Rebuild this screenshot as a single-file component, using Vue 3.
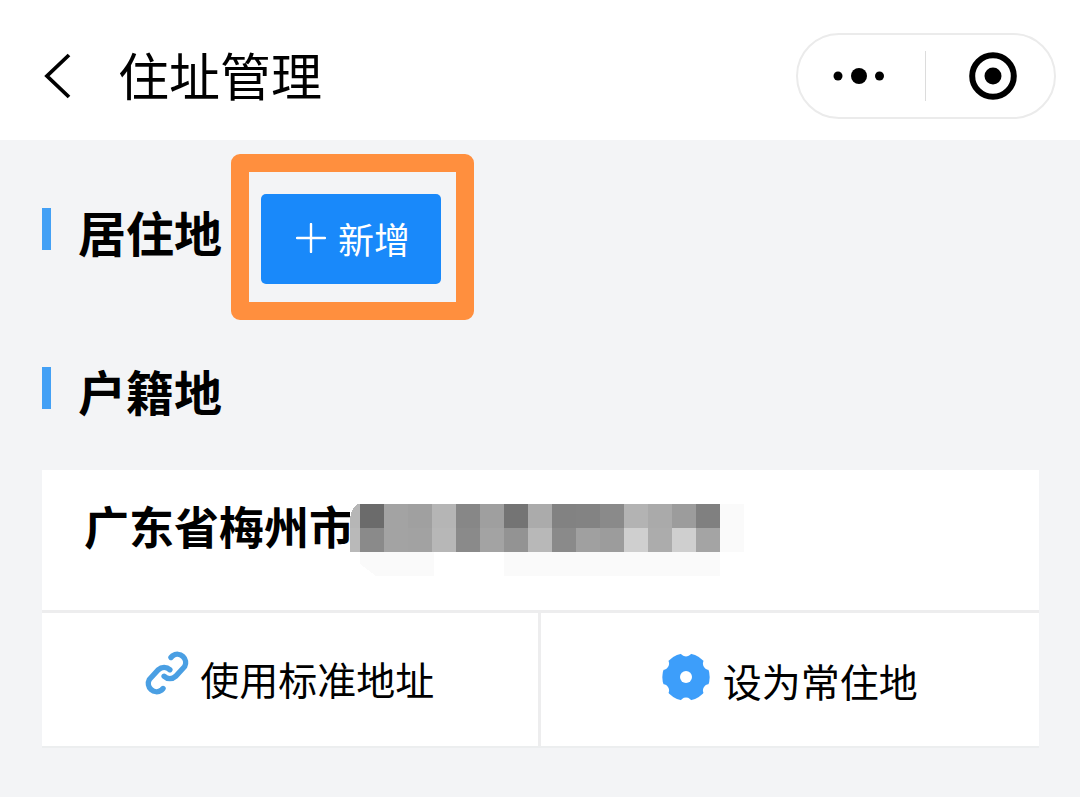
<script setup>
const shades = [
  ['#b6b6b6', '#b9b9b9'], ['#6b6b6b', '#8a8a8a'], ['#a3a3a3', '#a3a3a3'], ['#a0a0a0', '#a2a2a2'],
  ['#b5b5b5', '#b7b7b7'], ['#878787', '#8a8a8a'], ['#9f9f9f', '#a3a3a3'], ['#747474', '#939393'],
  ['#ababab', '#b8b8b8'], ['#828282', '#8a8a8a'], ['#838383', '#a0a0a0'], ['#8a8a8a', '#9c9c9c'],
  ['#b3b3b3', '#cfcfcf'], ['#aaaaaa', '#acacac'], ['#9c9c9c', '#cfcfcf'], ['#808080', '#a4a4a4'],
]
const tiles = shades.flatMap((pair, i) =>
  pair.map((fill, row) => ({
    key: `${i}-${row}`,
    fill,
    x: i === 0 ? 0 : 10 + (i - 1) * 24,
    y: row * 24,
    w: i === 0 ? 10 : 24,
  })),
)
</script>

<template>
  <div class="page">
    <header class="bar">
      <button class="back" aria-label="返回">
        <svg width="28" height="48" viewBox="0 0 28 48"><path d="M25 3 3 24 25 45" fill="none" stroke="#000" stroke-width="3.8" /></svg>
      </button>
      <h1>住址管理</h1>
      <div class="capsule">
        <button class="more" aria-label="更多">
          <svg width="52" height="18" viewBox="0 0 52 18"><circle cx="5" cy="9" r="4.5" /><circle cx="26" cy="9" r="8" /><circle cx="46.5" cy="9" r="4.5" /></svg>
        </button>
        <span class="divider"></span>
        <button class="close" aria-label="关闭">
          <svg width="48" height="48" viewBox="0 0 48 48"><circle cx="24" cy="24" r="20.8" fill="none" stroke="#000" stroke-width="6" /><circle cx="24" cy="24" r="8.5" /></svg>
        </button>
      </div>
    </header>

    <main>
      <section class="residence">
        <h2>居住地</h2>
        <div class="highlight">
          <button class="add">
            <svg width="30" height="30" viewBox="0 0 30 30"><path d="M15 1v28M1 15h28" stroke="#fff" stroke-width="2.4" stroke-linecap="round" /></svg>
            新增
          </button>
        </div>
      </section>

      <section class="household">
        <h2>户籍地</h2>
        <article class="card">
          <div class="address">
            <strong>广东省梅州市</strong>
            <svg class="mosaic" width="394" height="72" viewBox="0 0 394 72" shape-rendering="crispEdges">
              <path d="M10 48h74v24H26L10 60zM154 48h216v24H154zM370 0h24v48h-24z" fill="#fafafa" />
              <rect v-for="t in tiles" :key="t.key" :x="t.x" :y="t.y" :width="t.w" height="24" :fill="t.fill" />
              <path d="M0 0h8Q2 3 0 14z" fill="#fff" />
            </svg>
          </div>
          <div class="actions">
            <button class="link">
              <svg width="44" height="44" viewBox="3 3 122 122" fill="none" stroke="#4a9fe3" stroke-width="15" stroke-linecap="round">
                <path d="M75 21 80 16A23 23 0 0 1 113 46L88 73A23 23 0 0 1 56 73" />
                <path d="M53 107 48 112A23 23 0 0 1 15 82L40 55A23 23 0 0 1 72 55" />
              </svg>
              <span>使用标准地址</span>
            </button>
            <button class="usual">
              <svg width="48" height="48" viewBox="-24 -24 48 48">
                <circle r="23.7" fill="#3d9efa" />
                <ellipse v-for="n in 6" :key="n" cy="-25" rx="5.6" ry="4.4" fill="#fff" :transform="`rotate(${n * 60})`" />
                <circle r="6" fill="#fff" />
              </svg>
              <span>设为常住地</span>
            </button>
          </div>
        </article>
      </section>
    </main>
  </div>
</template>

<style>
body {
  margin: 0;
  background: #f3f4f6;
}
</style>

<style scoped>
.page {
  min-height: 100vh;
  background: #f3f4f6;
  color: #000;
  font-family: "Noto Sans CJK SC", sans-serif;
}
button {
  display: flex;
  align-items: center;
  justify-content: center;
  box-sizing: border-box;
  margin: 0;
  padding: 0;
  border: 0;
  background: none;
  color: inherit;
  font: inherit;
}
svg {
  display: block;
  flex: none;
}
h1,
h2 {
  margin: 0;
}
.bar {
  box-sizing: border-box;
  display: flex;
  align-items: center;
  min-height: 140px;
  padding: 0 24px 0 44px;
  background: #fff;
}
.back {
  margin-top: 12px;
}
h1 {
  margin: 8px auto 0 46px;
  font-size: 51px;
  font-weight: 400;
  line-height: 60px;
}
.capsule {
  display: flex;
  align-items: center;
  box-sizing: border-box;
  width: 260px;
  height: 86px;
  margin-top: 12px;
  border: 2px solid #ebebeb;
  border-radius: 43px;
}
.capsule button {
  flex: 1;
  height: 80px;
}
.more {
  padding-right: 4px;
}
.close {
  padding-left: 6px;
}
.divider {
  width: 1px;
  height: 50px;
  background: #dcdcdc;
}
main {
  padding: 14px 41px 48px 42px;
}
h2 {
  display: flex;
  align-items: flex-start;
  gap: 27px;
  font-size: 48px;
  font-weight: 700;
  line-height: 46px;
}
h2::before {
  content: "";
  width: 9px;
  height: 42px;
  background: #43a0f5;
}
.residence {
  display: flex;
  align-items: flex-start;
}
.residence h2 {
  margin-top: 54px;
}
.highlight {
  margin-left: 9px;
  padding: 22px 15px 18px 12px;
  border: 18px solid #ff8f3e;
  border-radius: 9px;
}
.add {
  gap: 12px;
  width: 180px;
  height: 90px;
  padding: 0 0 2px 4px;
  border-radius: 5px;
  background: #1989fa;
  color: #fff;
  font-size: 36px;
}
.household {
  margin-top: 47px;
}
.card {
  margin-top: 57px;
  border-bottom: 2px solid #eceeef;
  background: #fff;
}
.address {
  display: flex;
  align-items: flex-start;
  padding: 34px 42px;
  border-bottom: 3px solid #ededee;
}
strong {
  font-size: 45px;
  line-height: 44px;
}
.mosaic {
  margin-left: -4px;
}
.actions {
  display: grid;
  grid-template-columns: 1fr 1fr;
}
.actions button {
  height: 133px;
  font-size: 39px;
}
.link {
  gap: 11px;
  padding-bottom: 4px;
  border-right: 3px solid #ededee;
}
.link svg {
  margin-bottom: 10px;
}
.usual {
  gap: 13px;
}
.usual svg {
  margin-bottom: 5px;
}
</style>
